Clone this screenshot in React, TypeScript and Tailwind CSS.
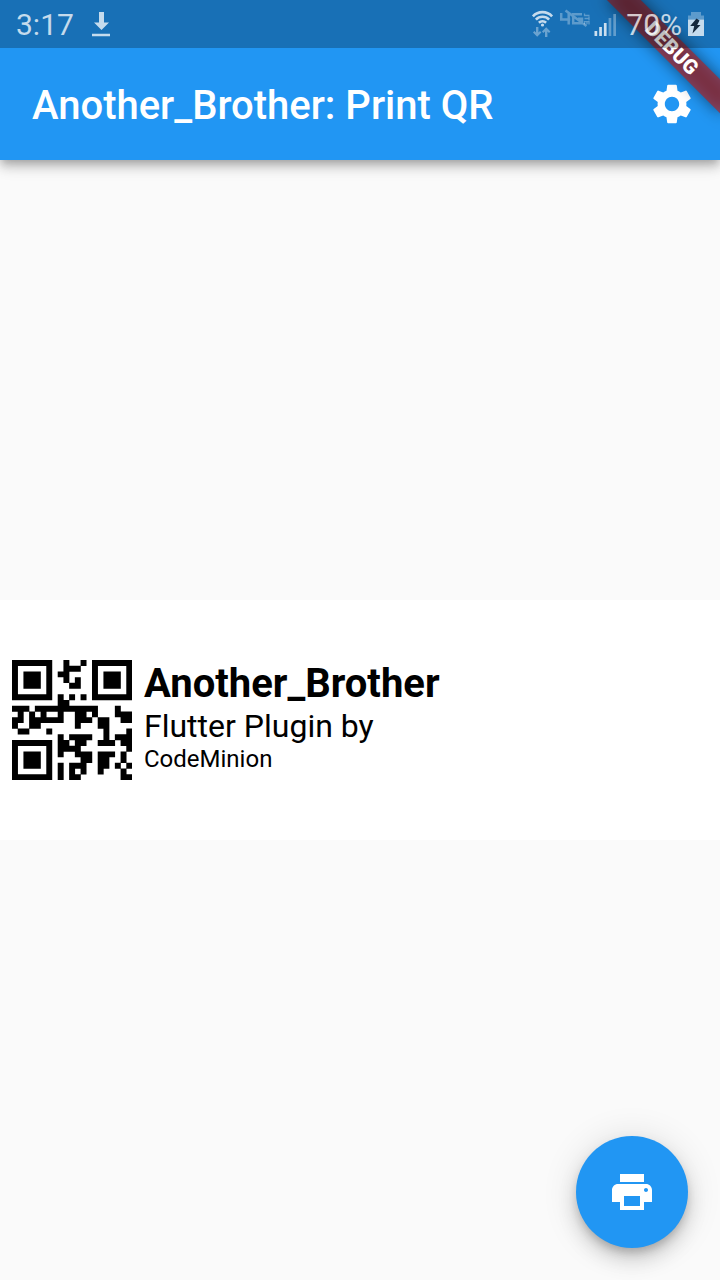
import React from "react";
import { MdPrint, MdSettings } from "react-icons/md";

const SIZE = 21;

function gfMul(a: number, b: number): number {
  let r = 0;
  while (b) {
    if (b & 1) r ^= a;
    a <<= 1;
    if (a & 256) a ^= 0x11d;
    b >>= 1;
  }
  return r;
}

function codewords(text: string): number[] {
  let bits = "0100" + text.length.toString(2).padStart(8, "0");
  for (const c of text) bits += c.charCodeAt(0).toString(2).padStart(8, "0");
  bits += "0000";
  const data: number[] = [];
  for (let i = 0; i < bits.length; i += 8) data.push(parseInt(bits.slice(i, i + 8), 2));
  for (let p = 0; data.length < 19; p++) data.push(p % 2 ? 0x11 : 0xec);
  let gen = [1];
  let root = 1;
  for (let i = 0; i < 7; i++) {
    const next = [...gen, 0];
    gen.forEach((g, k) => (next[k + 1] ^= gfMul(g, root)));
    gen = next;
    root = gfMul(root, 2);
  }
  const rem = [...data, 0, 0, 0, 0, 0, 0, 0];
  for (let i = 0; i < 19; i++) {
    const f = rem[i];
    gen.forEach((g, k) => (rem[i + k] ^= gfMul(g, f)));
  }
  return [...data, ...rem.slice(19)];
}

// Version 1, level L, mask 0
function qrModules(text: string): boolean[][] {
  const m: (boolean | null)[][] = Array.from({ length: SIZE }, () => Array(SIZE).fill(null));
  for (const [y, x] of [[0, 0], [0, 14], [14, 0]]) {
    for (let r = -1; r < 8; r++)
      for (let c = -1; c < 8; c++) {
        const yy = y + r;
        const xx = x + c;
        if (yy < 0 || xx < 0 || yy >= SIZE || xx >= SIZE) continue;
        const d = Math.max(Math.abs(r - 3), Math.abs(c - 3));
        m[yy][xx] = d === 3 || d < 2;
      }
  }
  for (let i = 8; i < 13; i++) m[6][i] = m[i][6] = i % 2 === 0;
  const fmt = [..."111011111000100"].map((b) => b === "1");
  const first = [[8, 0], [8, 1], [8, 2], [8, 3], [8, 4], [8, 5], [8, 7], [8, 8], [7, 8], [5, 8], [4, 8], [3, 8], [2, 8], [1, 8], [0, 8]];
  fmt.forEach((b, i) => {
    m[first[i][0]][first[i][1]] = b;
    if (i < 7) m[20 - i][8] = b;
    else m[8][6 + i] = b;
  });
  m[13][8] = true;
  const bits = codewords(text).map((w) => w.toString(2).padStart(8, "0")).join("");
  let n = 0;
  let up = true;
  for (let col = 20; col > 0; col -= 2) {
    if (col === 6) col = 5;
    for (let k = 0; k < SIZE; k++) {
      const y = up ? 20 - k : k;
      for (const x of [col, col - 1]) {
        if (m[y][x] !== null) continue;
        m[y][x] = (bits[n++] === "1") !== ((x + y) % 2 === 0);
      }
    }
    up = !up;
  }
  return m as boolean[][];
}

const qrPath = qrModules("another_brother")
  .flatMap((row, y) => row.map((on, x) => (on ? `M${x} ${y}h1.04v1.04h-1.04z` : "")))
  .join("");

function QrCode() {
  return (
    <svg viewBox="0 0 21 21" className="size-[120px] shrink-0">
      <path d={qrPath} />
    </svg>
  );
}

function DownloadIcon() {
  return (
    <svg viewBox="0 0 20 26" className="ml-[17px] h-[26px] w-5" fill="currentColor">
      <path d="M8 1h5v10.500h5L10.500 19 3 11.500h5zM1 22.800h18v2.400H1z" />
    </svg>
  );
}

function SignalIcons() {
  return (
    <svg viewBox="0 0 92 32" className="h-8 w-[92px]" fill="none">
      <g stroke="#fff" strokeOpacity=".75" strokeWidth="2.600">
        <path d="M1.900 8.300a13.200 13.200 0 0 1 19.200 0" />
        <path d="M4.900 11.700a9 9 0 0 1 13.200 0" />
        <path d="M7.900 14.800a5.200 5.200 0 0 1 7.200 0" />
      </g>
      <circle cx="11.500" cy="17" r="1.600" fill="#fff" fillOpacity=".75" />
      <path
        d="M5 19h2.400v5.500L9 23l1.400 1.600-4.200 4.200L2 24.600 3.400 23 5 24.500zM14 29h2.400v-5.500L18 25l1.400-1.600-4.200-4.200-4.200 4.200L12.400 25l1.600-1.500z"
        fill="#fff"
        fillOpacity=".36"
      />
      <path
        d="M30.200 5v6.500h9M37.700 5v11.500M51 6.200h-8.800v9h8.800v-4.500h-4M34.500 2.500l21 15.500"
        stroke="#fff"
        strokeOpacity=".3"
        strokeWidth="2.500"
      />
      <path
        d="M53.500 5.500v2h5M53.500 10.500h5M58 8.500v4M53.500 16.500v-2.800h4.500v2.800M56 13.700v2.500"
        stroke="#fff"
        strokeOpacity=".3"
        strokeWidth="1.300"
      />
      <g fill="#fff">
        <path d="M63.500 23h2.700v5h-2.700zM68.200 19h2.700v9h-2.700zM72.900 15h2.700v13h-2.700z" fillOpacity=".78" />
        <path d="M77.600 10h2.700v18h-2.700zM82.300 6h2.700v22h-2.700z" fillOpacity=".32" />
      </g>
    </svg>
  );
}

function BatteryIcon() {
  return (
    <svg viewBox="0 0 18 26" className="ml-[6px] h-[26px] w-[18px]">
      <path d="M3 1h10v3.500h3v4H0v-4h3z" fill="#fff" fillOpacity=".3" />
      <path d="M0 8.500h16V25H0z" fill="#fff" fillOpacity=".75" />
      <path d="M8.500 7.500L2.200 15h4L4.500 22.500 12.500 14H9.200l2.300-4.500z" fill="#13263a" />
    </svg>
  );
}

function StatusBar() {
  return (
    <div className="absolute inset-x-0 top-0 z-20 flex h-12 items-center bg-black/25 pl-4 pr-[14px] text-[30px] leading-none text-white/75">
      <span className="pt-0.5">3:17</span>
      <DownloadIcon />
      <div className="ml-auto flex items-center">
        <SignalIcons />
        <span className="ml-[3px] pt-0.5">70%</span>
        <BatteryIcon />
      </div>
    </div>
  );
}

function DebugBanner() {
  return (
    <div className="pointer-events-none absolute right-0 top-0 z-10 size-[180px] overflow-hidden">
      <div className="absolute left-[100px] top-[56px] h-6 w-[160px] origin-[80px_-56px] rotate-45">
        <div className="absolute inset-0 bg-black/50 blur-[8px]" />
        <div className="relative flex h-6 items-center justify-center bg-[#b71c1ca0] text-[20.4px] font-black leading-none text-white">
          DEBUG
        </div>
      </div>
    </div>
  );
}

export default function App() {
  return (
    <div className="relative flex h-[1280px] w-[720px] flex-col overflow-hidden bg-[#fafafa] font-['Roboto',sans-serif]">
      <StatusBar />
      <DebugBanner />
      <header className="flex h-40 shrink-0 items-center justify-between bg-[#2196f3] pl-8 pr-6 pt-12 text-white shadow-[0_4px_8px_-2px_rgba(0,0,0,0.2),0_8px_10px_0_rgba(0,0,0,0.14),0_2px_20px_0_rgba(0,0,0,0.12)]">
        <h1 className="pt-1 text-[40px] font-medium leading-[48px]">Another_Brother: Print QR</h1>
        <MdSettings className="size-12" />
      </header>
      <main className="flex flex-1 flex-col justify-center">
        <section className="flex h-60 items-center gap-3 bg-white pl-3 text-black">
          <QrCode />
          <div className="flex flex-col pb-2">
            <span className="text-[40px] font-bold leading-[47px]">Another_Brother</span>
            <span className="text-[32px] leading-[38px]">Flutter Plugin by</span>
            <span className="text-[24px] leading-[28px]">CodeMinion</span>
          </div>
        </section>
      </main>
      <button className="absolute bottom-8 right-8 flex size-28 items-center justify-center rounded-full bg-[#2196f3] text-white shadow-[0_6px_10px_-2px_rgba(0,0,0,0.2),0_12px_20px_0_rgba(0,0,0,0.14),0_2px_36px_0_rgba(0,0,0,0.12)]">
        <MdPrint className="size-12" />
      </button>
    </div>
  );
}
